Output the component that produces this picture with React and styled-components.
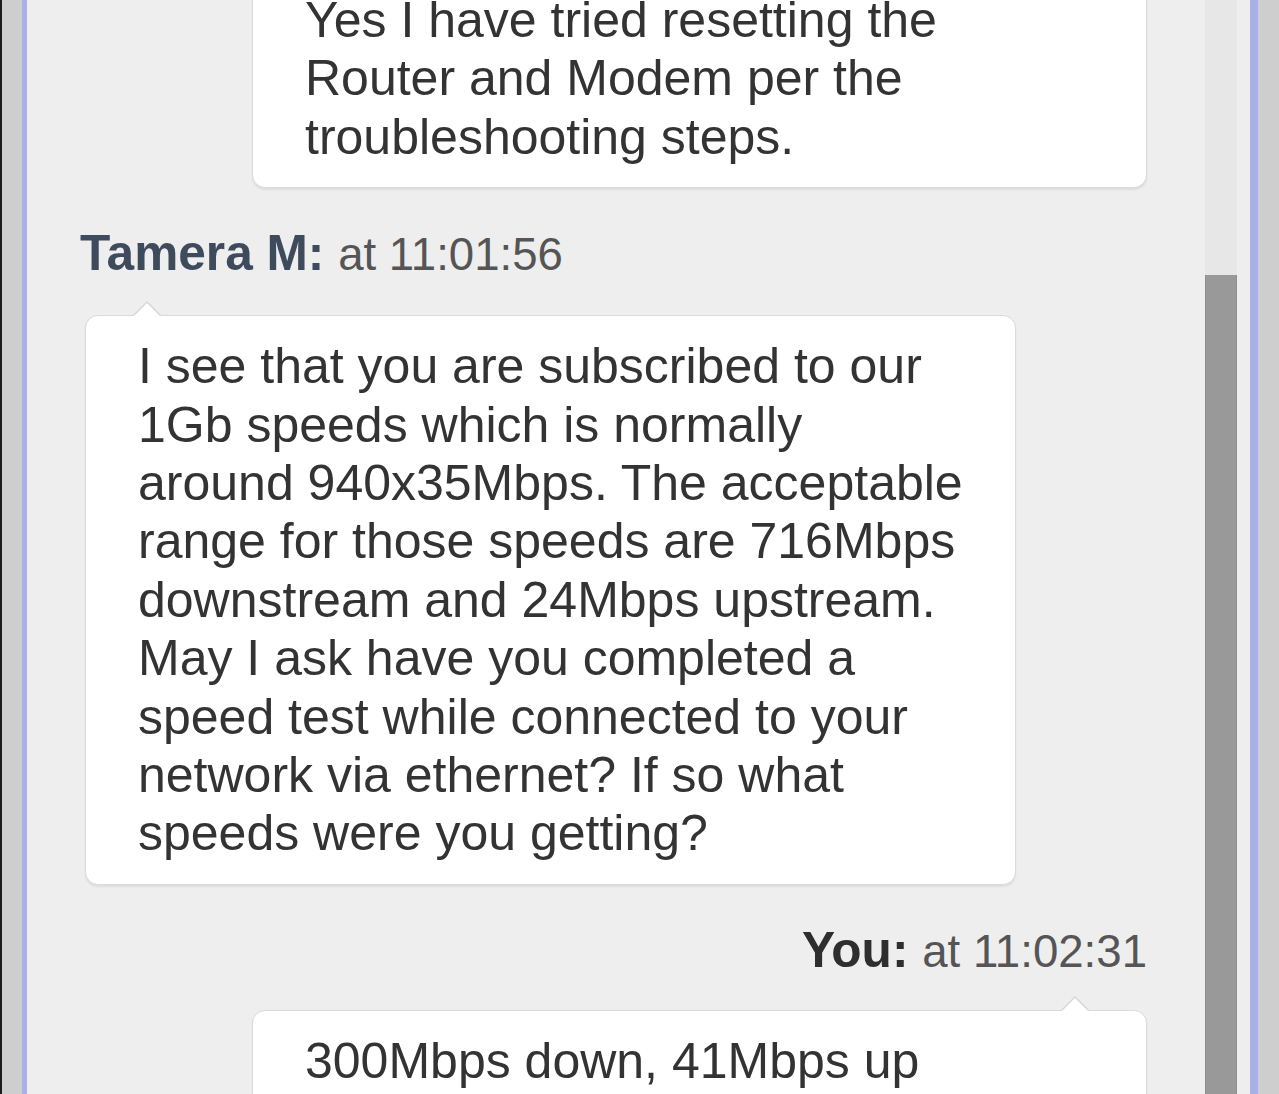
import React from 'react'
import styled, { createGlobalStyle } from 'styled-components'

const GlobalStyle = createGlobalStyle`
  html, body {
    margin: 0;
    padding: 0;
    height: 1094px;
    overflow: hidden;
    font-family: "Liberation Sans", Arial, sans-serif;
  }
`

const Frame = styled.div`
  display: flex;
  height: 1094px;
  box-sizing: border-box;
  background: #cecece;
  border-left: 2px solid #1c1c1c;
  padding: 0 21px 0 20px;
`

const Panel = styled.div`
  display: flex;
  flex: 1;
  background: #eeeeee;
  border-left: 5px solid #a9afe8;
  border-right: 8px solid #a9afe8;
  overflow: hidden;
`

const ChatColumn = styled.div`
  flex: 1;
  overflow: hidden;
  padding: 0 58px 0 53px;
`

// the view is scrolled, so the first bubble starts above the top edge
const MessageList = styled.div`
  display: flex;
  flex-direction: column;
  margin-top: -31px;
`

const Label = styled.div`
  align-self: ${props => (props.mine ? 'flex-end' : 'flex-start')};
  margin: ${props => (props.mine ? '36px 0 29px' : '36px 0 31px')};
  font-size: 49.6px;
  line-height: 58px;
  font-weight: bold;
  color: ${props => (props.mine ? '#2e2e2e' : '#3e4b5c')};
  white-space: nowrap;
`

const Time = styled.span`
  font-size: 45.6px;
  font-weight: normal;
  color: #555555;
`

const Bubble = styled.div`
  position: relative;
  align-self: ${props => (props.mine ? 'flex-end' : 'flex-start')};
  width: ${props => (props.mine ? '895px' : 'fit-content')};
  margin-left: ${props => (props.mine ? '0' : '5px')};
  box-sizing: border-box;
  padding: 21px 52px;
  background: #ffffff;
  border: 1px solid #dadada;
  border-radius: 13px;
  box-shadow: 0 2px 2px rgba(0, 0, 0, 0.07);
  font-size: 50px;
  line-height: 58.4px;
  color: #333333;
  white-space: nowrap;

  &::before,
  &::after {
    content: ${props => (props.tail ? "''" : 'none')};
    position: absolute;
    width: 0;
    height: 0;
    border-style: solid;
    ${props => (props.mine ? 'right: 57px;' : 'left: 47px;')}
  }

  &::before {
    top: -15px;
    border-width: 0 14px 14px 14px;
    border-color: transparent transparent #d6d6d6 transparent;
  }

  &::after {
    top: -13px;
    ${props => (props.mine ? 'right: 58px;' : 'left: 48px;')}
    border-width: 0 13px 13px 13px;
    border-color: transparent transparent #ffffff transparent;
  }
`

const Scrollbar = styled.div`
  display: flex;
  flex-direction: column;
  width: 32px;
  margin-right: 13px;
  background: #e7e7e7;
`

const Thumb = styled.div`
  margin-top: 275px;
  flex: 1;
  background: #999999;
  border-left: 1px solid #8f8f8f;
  border-right: 1px solid #8f8f8f;
`

const messages = [
  {
    mine: true,
    lines: [
      'Yes I have tried resetting the',
      'Router and Modem per the',
      'troubleshooting steps.',
    ],
  },
  {
    author: 'Tamera M:',
    time: 'at 11:01:56',
    lines: [
      'I see that you are subscribed to our',
      '1Gb speeds which is normally',
      'around 940x35Mbps. The acceptable',
      'range for those speeds are 716Mbps',
      'downstream and 24Mbps upstream.',
      'May I ask have you completed a',
      'speed test while connected to your',
      'network via ethernet? If so what',
      'speeds were you getting?',
    ],
  },
  {
    mine: true,
    author: 'You:',
    time: 'at 11:02:31',
    lines: ['300Mbps down, 41Mbps up'],
  },
]

const App = () => (
  <>
    <GlobalStyle />
    <Frame>
      <Panel>
        <ChatColumn>
          <MessageList>
            {messages.map((msg, i) => (
              <React.Fragment key={i}>
                {msg.author && (
                  <Label mine={msg.mine}>
                    {msg.author} <Time>{msg.time}</Time>
                  </Label>
                )}
                <Bubble mine={msg.mine} tail={!!msg.author}>
                  {msg.lines.map((line, j) => (
                    <React.Fragment key={j}>
                      {line}
                      {j < msg.lines.length - 1 && <br />}
                    </React.Fragment>
                  ))}
                </Bubble>
              </React.Fragment>
            ))}
          </MessageList>
        </ChatColumn>
        <Scrollbar>
          <Thumb />
        </Scrollbar>
      </Panel>
    </Frame>
  </>
)

export default App
